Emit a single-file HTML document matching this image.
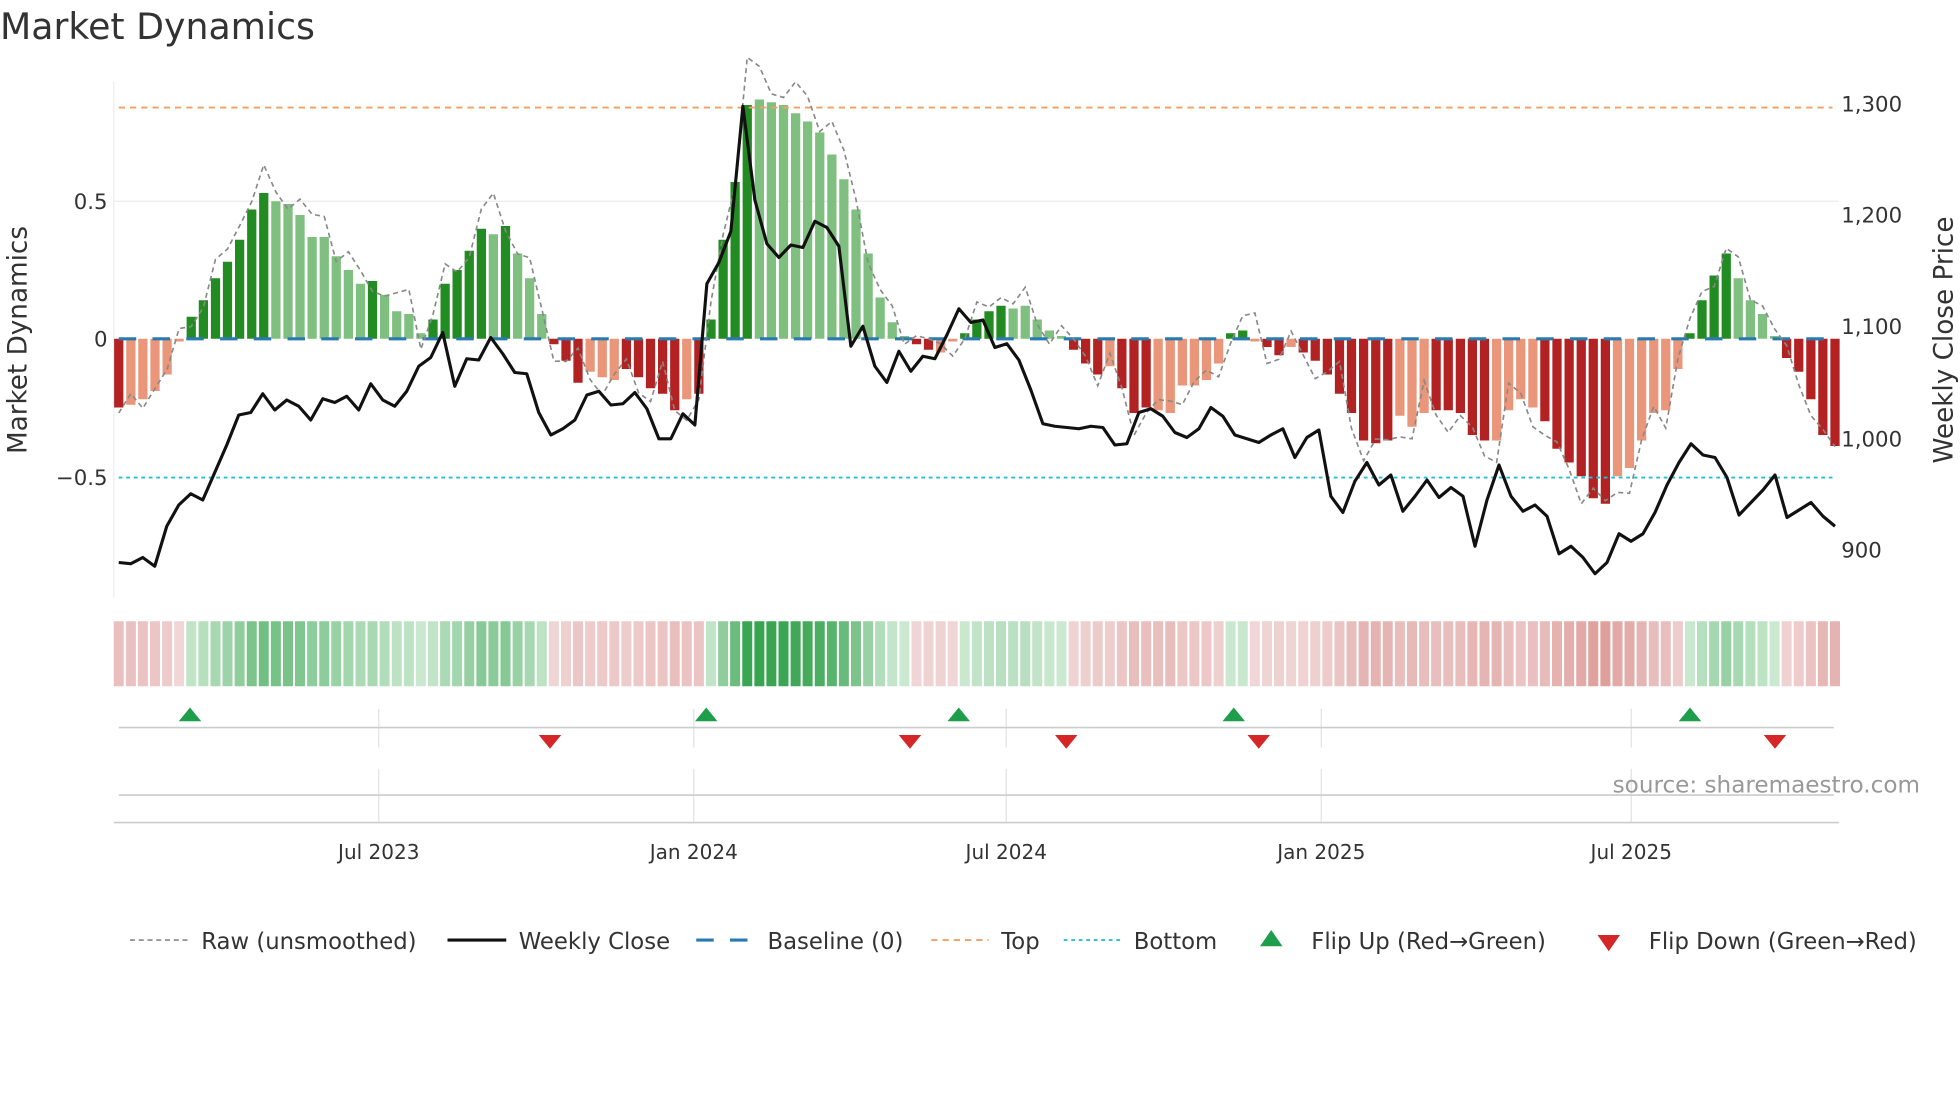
<!DOCTYPE html>
<html><head><meta charset="utf-8"><style>
html,body{margin:0;padding:0;background:#fff;}
svg{display:block;font-family:"DejaVu Sans","Liberation Sans",sans-serif;}
</style></head><body>
<svg id="s" width="1960" height="1102" viewBox="0 0 1568 881.6" xmlns="http://www.w3.org/2000/svg">
<rect width="1568" height="882" fill="#fff"/>
<text x="0" y="31" font-size="29" fill="#333">Market Dynamics</text>
<line x1="91" y1="65" x2="91" y2="478" stroke="#eee" stroke-width="1"/>
<line x1="91" y1="161" x2="1471" y2="161" stroke="#ececec" stroke-width="1"/>
<g id="bars"></g>
<line x1="95" y1="86" x2="1466" y2="86" stroke="#f0a060" stroke-width="1.5" stroke-dasharray="5,4"/>
<line x1="95" y1="382" x2="1466" y2="382" stroke="#22bfd8" stroke-width="1.5" stroke-dasharray="3,3"/>
<line x1="95" y1="271" x2="1466" y2="271" stroke="#2a7ab0" stroke-width="2.5" stroke-dasharray="14,13"/>
<polyline id="raw" fill="none" stroke="#888" stroke-width="1.3" stroke-dasharray="4,3"/>
<polyline id="price" fill="none" stroke="#111" stroke-width="2.5" stroke-linejoin="round"/>
<g font-size="17" fill="#333">
<text x="86" y="167" text-anchor="end">0.5</text>
<text x="86" y="277" text-anchor="end">0</text>
<text x="86" y="388" text-anchor="end">−0.5</text>
<text x="1473" y="89">1,300</text>
<text x="1473" y="178">1,200</text>
<text x="1473" y="267">1,100</text>
<text x="1473" y="357">1,000</text>
<text x="1473" y="446">900</text>
</g>
<text transform="translate(21,272) rotate(-90)" font-size="21" fill="#333" text-anchor="middle">Market Dynamics</text>
<text transform="translate(1562,272) rotate(-90)" font-size="21" fill="#333" text-anchor="middle">Weekly Close Price</text>
<g id="heat"></g>
<g stroke="#e3e3e3" stroke-width="1">
<line x1="303" y1="567" x2="303" y2="598"/><line x1="555" y1="567" x2="555" y2="598"/><line x1="805" y1="567" x2="805" y2="598"/><line x1="1057" y1="567" x2="1057" y2="598"/><line x1="1305" y1="567" x2="1305" y2="598"/>
<line x1="303" y1="615" x2="303" y2="658"/><line x1="555" y1="615" x2="555" y2="658"/><line x1="805" y1="615" x2="805" y2="658"/><line x1="1057" y1="615" x2="1057" y2="658"/><line x1="1305" y1="615" x2="1305" y2="658"/>
</g>
<line x1="95" y1="582" x2="1467" y2="582" stroke="#ccc" stroke-width="1.3"/>
<line x1="95" y1="636" x2="1467" y2="636" stroke="#ccc" stroke-width="1.3"/>
<line x1="91" y1="658" x2="1471" y2="658" stroke="#ccc" stroke-width="1.3"/>
<g id="flips"></g>
<text x="1536" y="634" font-size="18.5" fill="#999" text-anchor="end">source: sharemaestro.com</text>
<g font-size="16" fill="#333" text-anchor="middle">
<text x="303" y="687">Jul 2023</text><text x="555" y="687">Jan 2024</text><text x="805" y="687">Jul 2024</text><text x="1057" y="687">Jan 2025</text><text x="1305" y="687">Jul 2025</text>
</g>
<g font-size="18.2" fill="#333">
<line x1="104" y1="752" x2="150" y2="752" stroke="#888" stroke-width="1.3" stroke-dasharray="4,3"/>
<text x="161" y="759">Raw (unsmoothed)</text>
<line x1="358" y1="752" x2="405" y2="752" stroke="#111" stroke-width="2.5"/>
<text x="415" y="759">Weekly Close</text>
<line x1="557" y1="752" x2="604" y2="752" stroke="#2a7ab0" stroke-width="2.5" stroke-dasharray="14,13"/>
<text x="614" y="759">Baseline (0)</text>
<line x1="745" y1="752" x2="791" y2="752" stroke="#f0a060" stroke-width="1.5" stroke-dasharray="5,4"/>
<text x="801" y="759">Top</text>
<line x1="851" y1="752" x2="897" y2="752" stroke="#22bfd8" stroke-width="1.5" stroke-dasharray="3,3"/>
<text x="907" y="759">Bottom</text>
<polygon points="1008,757 1026,757 1017,744" fill="#1e9e4a"/>
<text x="1049" y="759">Flip Up (Red→Green)</text>
<polygon points="1278,748 1296,748 1287,761" fill="#d62728"/>
<text x="1319" y="759">Flip Down (Green→Red)</text>
</g>
</svg>
<script>
var V="R-.25 P-.24 P-.22 P-.19 P-.13 P-.01 D.08 D.14 D.22 D.28 D.36 D.47 D.53 L.5 L.49 L.45 L.37 L.37 L.3 L.25 L.2 D.21 L.16 L.1 L.09 L.02 D.07 D.2 D.25 D.32 D.4 L.38 D.41 L.31 L.22 L.09 R-.02 R-.08 R-.16 P-.12 P-.14 P-.15 R-.11 R-.14 R-.18 R-.2 R-.26 P-.22 R-.2 D.07 D.36 D.57 D.85 L.87 L.86 L.85 L.82 L.79 L.75 L.67 L.58 L.47 L.31 L.15 L.06 L.01 R-.02 R-.04 P-.05 P-.01 D.02 D.07 D.1 D.12 L.11 L.12 L.07 L.03 L.01 R-.04 R-.09 R-.13 P-.1 R-.18 R-.27 R-.25 P-.26 P-.27 P-.17 P-.17 P-.15 P-.09 D.02 D.03 P-.01 R-.03 R-.06 P-.03 R-.05 R-.08 R-.13 R-.2 R-.27 R-.37 R-.38 R-.37 P-.28 P-.32 P-.27 R-.26 R-.26 R-.27 R-.35 R-.37 P-.37 P-.26 P-.22 P-.25 R-.3 R-.4 R-.45 R-.5 R-.58 R-.6 P-.5 P-.47 P-.37 P-.27 P-.26 P-.11 D.02 D.14 D.23 D.31 L.22 L.14 L.09 L.01 R-.07 R-.12 R-.22 R-.35 R-.39".split(" ");
var C={D:"#228b22",L:"#7fbf7f",R:"#b22222",P:"#e9967a"};
var n=V.length,x0=95,dx=(1468-95)/(n-1),b="",h="",raw=[];
for(var i=0;i<n;i++){var c=V[i][0],v=parseFloat(V[i].slice(1)),x=x0+i*dx,y=271-v*220;
b+='<rect x="'+(x-3.7).toFixed(1)+'" y="'+Math.min(y,271).toFixed(1)+'" width="7.4" height="'+Math.max(Math.abs(v*220),1).toFixed(1)+'" fill="'+C[c]+'"/>';
var t=Math.min(Math.abs(v)/0.87,1),col;
if(v>=0){col="rgb("+Math.round(205-150*t)+","+Math.round(234-70*t)+","+Math.round(210-130*t)+")";}
else{col="rgb("+Math.round(240-25*t)+","+Math.round(215-80*t)+","+Math.round(215-85*t)+")";}
h+='<rect x="'+(x-4).toFixed(1)+'" y="497" width="8" height="52" fill="'+col+'"/>';
var rv=v*1.08+0.06*Math.sin(i*1.7)+(i%7==3?0.08:0);raw.push(x.toFixed(1)+","+(271-rv*220).toFixed(1));}
document.getElementById("bars").innerHTML=b;document.getElementById("heat").innerHTML=h;
document.getElementById("raw").setAttribute("points",raw.join(" "));
var P=[450,451,446,453,421,404,395,400,378,356,332,330,315,328,320,325,336,319,322,317,328,307,320,325,313,293,286,266,309,287,288,270,283,298,299,330,348,343,336,316,313,324,323,314,327,351,351,331,340,227,210,185,85,160,195,206,196,198,177,182,197,277,261,293,306,281,297,285,287,268,247,258,256,278,275,288,312,339,341,342,343,341,342,356,355,330,327,333,346,350,343,326,333,348,351,354,348,343,366,350,344,397,410,385,370,388,380,409,397,384,398,390,397,437,400,372,397,409,404,413,443,437,446,459,450,427,433,427,410,388,370,355,364,366,382,412,402,392,380,414,408,402,413,421];
var m=P.length,pd=(1468-95)/(m-1),pp=[];for(var j=0;j<m;j++)pp.push((95+j*pd).toFixed(1)+","+P[j]);
document.getElementById("price").setAttribute("points",pp.join(" "));
var f="";[152,565,767,987,1352].forEach(function(x){f+='<polygon points="'+(x-9)+',577 '+(x+9)+',577 '+x+',566" fill="#1e9e4a"/>';});
[440,728,853,1007,1420].forEach(function(x){f+='<polygon points="'+(x-9)+',588 '+(x+9)+',588 '+x+',599" fill="#d62728"/>';});
document.getElementById("flips").innerHTML=f;
</script>
</body></html>
